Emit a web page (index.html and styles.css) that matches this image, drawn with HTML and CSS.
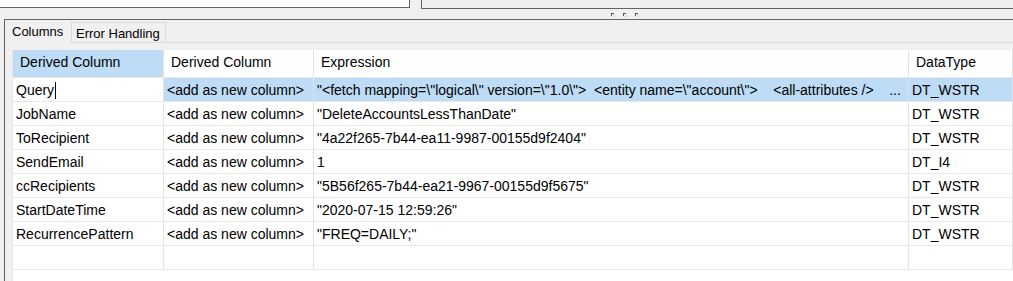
FILE: index.html
```
<!DOCTYPE html>
<html>
<head>
<meta charset="utf-8" />
    <title>Derived Column Transformation Editor</title>
    <link rel="stylesheet" href="styles.css">
</head>
<body>
    <div class="top_area">
        <div class="top_boxes">
            <div class="box_left"></div>
            <div class="box_right"></div>
        </div>
        <div class="grip_bar">
            <span class="grip"></span><span class="grip"></span><span class="grip"></span>
        </div>
    </div>
    <div class="tab_panel">
        <div class="tab_strip">
            <div class="tab tab_on">Columns</div>
            <div class="tab">Error Handling</div>
            <div class="tab_rest"></div>
        </div>
        <div class="tab_page">
            <div class="grid">
                <div class="hd hd_sel">Derived Column</div>
                <div class="hd">Derived Column</div>
                <div class="hd">Expression</div>
                <div class="hd">DataType</div>

                <div class="cell">Query<span class="caret"></span></div>
                <div class="cell sel">&lt;add as new column&gt;</div>
                <div class="cell sel expr">"&lt;fetch mapping=\"logical\" version=\"1.0\"&gt;  &lt;entity name=\"account\"&gt;    &lt;all-attributes /&gt;    ...</div>
                <div class="cell sel">DT_WSTR</div>

                <div class="cell">JobName</div>
                <div class="cell">&lt;add as new column&gt;</div>
                <div class="cell">"DeleteAccountsLessThanDate"</div>
                <div class="cell">DT_WSTR</div>

                <div class="cell">ToRecipient</div>
                <div class="cell">&lt;add as new column&gt;</div>
                <div class="cell">"4a22f265-7b44-ea11-9987-00155d9f2404"</div>
                <div class="cell">DT_WSTR</div>

                <div class="cell">SendEmail</div>
                <div class="cell">&lt;add as new column&gt;</div>
                <div class="cell">1</div>
                <div class="cell">DT_I4</div>

                <div class="cell">ccRecipients</div>
                <div class="cell">&lt;add as new column&gt;</div>
                <div class="cell">"5B56f265-7b44-ea21-9967-00155d9f5675"</div>
                <div class="cell">DT_WSTR</div>

                <div class="cell">StartDateTime</div>
                <div class="cell">&lt;add as new column&gt;</div>
                <div class="cell">"2020-07-15 12:59:26"</div>
                <div class="cell">DT_WSTR</div>

                <div class="cell">RecurrencePattern</div>
                <div class="cell">&lt;add as new column&gt;</div>
                <div class="cell">"FREQ=DAILY;"</div>
                <div class="cell">DT_WSTR</div>

                <div class="cell"></div>
                <div class="cell"></div>
                <div class="cell"></div>
                <div class="cell"></div>
            </div>
        </div>
    </div>
</body>
</html>
```

FILE: styles.css
```
* {
    margin:0;
    padding:0;
    box-sizing:border-box;
    font-family:'Liberation Sans', Arial, sans-serif;
}
html,body {
    width:100%;
    height:100%;
    overflow:hidden;
}
body {
    background:#f0f0f0;
    color:#000;
}
/* top split area */
.top_area {
    height:19px;
}
.top_boxes {
    display:flex;
    height:9px;
}
.box_left {
    width:410px;
    height:8px;
    background:#fff;
    border-right:1px solid #646464;
    border-bottom:1px solid #646464;
}
.box_right {
    flex:1;
    height:9px;
    margin-left:11px;
    border-left:1px solid #646464;
    border-bottom:1px solid #646464;
}
.grip_bar {
    display:flex;
    gap:9px;
    height:10px;
    padding:4px 0 0 611px;
}
    .grip_bar .grip {
        width:3px;
        height:3px;
        border-top:1px solid #555;
        border-left:1px solid #555;
        box-shadow:1px 1px 0 #dcdcdc;
    }
/* tabs */
.tab_panel {
    display:flex;
    flex-direction:column;
    height:calc(100% - 19px);
    margin-left:4px;
    border-top:1px solid #646464;
    border-left:1px solid #646464;
}
.tab_strip {
    display:flex;
    align-items:flex-end;
    height:23px;
}
.tab {
    font-size:13px;
    line-height:15px;
    white-space:nowrap;
}
.tab_on {
    width:66px;
    height:23px;
    padding:4px 0 0 7px;
}
.tab:not(.tab_on) {
    width:95px;
    height:21px;
    padding:3px 0 0 4px;
    border:1px solid #d9d9d9;
}
.tab_rest {
    flex:1;
    border-bottom:1px solid #d9d9d9;
}
.tab_page {
    flex:1;
    display:flex;
    padding:7px 0 0 7px;
}
/* grid */
.grid {
    flex:1;
    display:grid;
    grid-template-columns:151px 150px 595px 1fr;
    grid-template-rows:28px;
    grid-auto-rows:24px;
    align-content:start;
    background:#fff;
    border-left:1px solid #e6e6e6;
    font-size:14px;
    line-height:16px;
}
.hd, .cell {
    border-right:1px solid #e3e3e3;
    border-bottom:1px solid #e8e8e8;
    white-space:pre;
    overflow:hidden;
}
.hd {
    padding:4px 0 0 7px;
}
.hd_sel {
    background:#bedcf5;
}
.cell {
    padding:4px 0 0 3px;
}
.cell.sel {
    background:#bedcf5;
}
.caret {
    display:inline-block;
    width:1px;
    height:17px;
    margin-left:1px;
    vertical-align:-4px;
    background:#000;
}
```
